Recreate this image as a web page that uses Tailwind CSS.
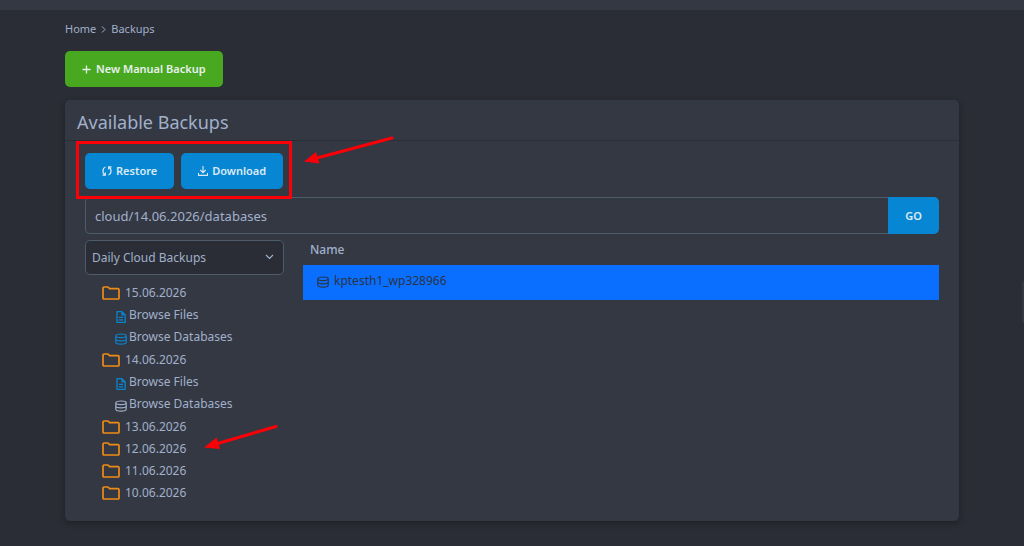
<!DOCTYPE html>
<html lang="en">
<head>
<meta charset="utf-8">
<meta name="viewport" content="width=device-width, initial-scale=1">
<title>Backups</title>
<script src="https://cdn.jsdelivr.net/npm/@tailwindcss/browser@4"></script>
</head>
<body class="relative min-h-screen overflow-x-hidden bg-[#2a2d35] font-['Noto_Sans',sans-serif] text-[13px] leading-[22px] text-[#a1b0cb]">
<svg class="hidden" aria-hidden="true">
  <symbol id="folder" viewBox="0 0 18 14"><path d="M1 2.2Q1 1 2.2 1H6L7.6 2.700H16Q17 2.700 17 3.7V12Q17 13 16 13H2Q1 13 1 12Z" fill="none" stroke="currentColor" stroke-width="1.7" stroke-linejoin="round"/></symbol>
  <symbol id="file" viewBox="0 0 10 12"><path d="M1 .7H6L9.2 3.9V11.3H1ZM6 .7V3.9H9.2M2.8 6.4H7.2M2.8 8.8H7.2" fill="none" stroke="currentColor" stroke-width="1.3" stroke-linejoin="round"/></symbol>
  <symbol id="database" viewBox="0 0 12 12"><path d="M.8 2.800C.8 .4 11.2 .4 11.2 2.800S.8 5.200 .8 2.800V9.2C.8 11.700 11.2 11.700 11.2 9.2V2.800M.8 6C.8 8.400 11.2 8.400 11.2 6" fill="none" stroke="currentColor" stroke-width="1.2"/></symbol>
</svg>
<header class="h-[10px] bg-[#343842]"></header>
<main class="mx-[65px] pt-2 pb-6">
  <nav aria-label="Breadcrumb" class="flex items-center gap-1 text-[11px]">
    <a href="#">Home</a>
    <svg class="size-[7px]" viewBox="0 0 7 7" fill="none" stroke="currentColor"><path d="M2 .5 5 3.5 2 6.500"/></svg>
    <a href="#">Backups</a>
  </nav>
  <button type="button" class="mt-[11px] flex h-9 items-center gap-[5px] rounded-[5px] bg-[#48a921] px-[17px] text-[11px] font-semibold text-[#e8f0ee]">
    <svg class="size-[9px]" viewBox="0 0 9 9" stroke="currentColor" stroke-width="1.3"><path d="M4.5 .5V8.5M.5 4.5H8.5"/></svg>
    New Manual Backup
  </button>
  <section class="mt-[13px] rounded-[5px] bg-[#343842] pb-[17px] shadow-[0_2px_6px_rgba(0,0,0,0.3)]">
    <h1 class="border-b border-[#2b2e37] px-3 pt-[10px] pb-[6px] text-lg leading-6 font-normal">Available Backups</h1>
    <div class="px-5 pt-3">
      <div class="relative flex w-fit gap-[7px]">
        <button type="button" class="flex h-9 items-center gap-1 rounded-[5px] bg-[#0787d3] px-[17px] text-[11px] font-semibold text-[#dceaf5]">
          <svg class="size-[10px]" viewBox="0 0 10 10" fill="none" stroke="currentColor" stroke-width="1.3"><path d="M3.500 1C.3 2 .2 7 2.6 8.8M.5 9.2H3.300V6.600M6.5 9C9.7 8 9.8 3 7.4 1.2M9.500 .8H6.700V3.400"/></svg>
          Restore
        </button>
        <button type="button" class="flex h-9 items-center gap-1 rounded-[5px] bg-[#0787d3] px-[17px] text-[11px] font-semibold text-[#dceaf5]">
          <svg class="size-[10px]" viewBox="0 0 10 10" fill="none" stroke="currentColor" stroke-width="1.1"><path d="M5 0V6.5M2.3 4 5 6.7 7.7 4M.5 7V9.4H9.5V7"/></svg>
          Download
        </button>
        <div class="absolute -inset-x-[9px] -top-3 -bottom-[10px] border-[3px] border-[#fb0007]"></div>
      </div>
      <form class="mt-2 flex h-[37px]">
        <input aria-label="Path" value="cloud/14.06.2026/databases" class="min-w-0 flex-1 rounded-l-[5px] border border-r-0 border-[#4c5c6b] bg-transparent px-[9px] outline-none">
        <button type="button" class="w-[51px] rounded-r-[5px] bg-[#0787d3] text-[11px] font-semibold text-[#dceaf5]">GO</button>
      </form>
      <div class="mt-[6px] flex gap-[19px]">
        <div class="w-[199px] shrink-0">
          <div class="relative">
            <select aria-label="Backup type" class="h-[35px] w-full appearance-none rounded-[5px] border border-[#4c5c6b] bg-[#2a2d35] px-[6px] text-xs outline-none"><option>Daily Cloud Backups</option></select>
            <svg class="pointer-events-none absolute top-[14px] right-[10px] h-[6px] w-[9px]" viewBox="0 0 9 6" fill="none" stroke="currentColor" stroke-width="1.2"><path d="M1 1 4.5 4.5 8 1"/></svg>
          </div>
          <ul class="mt-[7px] pl-[17px] text-xs leading-[22px]">
            <li class="pb-px">
              <div class="flex items-center gap-[5px]"><svg class="h-[14px] w-[18px] text-[#ef8b16]"><use href="#folder"/></svg>15.06.2026</div>
              <ul class="pl-[13px]">
                <li><a href="#" class="flex items-center gap-[2px]"><svg class="mt-1 h-3 w-3 text-[#0b84ce]"><use href="#file"/></svg>Browse Files</a></li>
                <li><a href="#" class="flex items-center gap-[2px]"><svg class="mt-1 h-3 w-3 text-[#0b84ce]"><use href="#database"/></svg>Browse Databases</a></li>
              </ul>
            </li>
            <li class="pb-px">
              <div class="flex items-center gap-[5px]"><svg class="h-[14px] w-[18px] text-[#ef8b16]"><use href="#folder"/></svg>14.06.2026</div>
              <ul class="pl-[13px]">
                <li><a href="#" class="flex items-center gap-[2px]"><svg class="mt-1 h-3 w-3 text-[#0b84ce]"><use href="#file"/></svg>Browse Files</a></li>
                <li><a href="#" class="flex items-center gap-[2px]"><svg class="mt-1 h-3 w-3"><use href="#database"/></svg>Browse Databases</a></li>
              </ul>
            </li>
            <li class="flex items-center gap-[5px]"><svg class="h-[14px] w-[18px] text-[#ef8b16]"><use href="#folder"/></svg>13.06.2026</li>
            <li class="flex items-center gap-[5px]"><svg class="h-[14px] w-[18px] text-[#ef8b16]"><use href="#folder"/></svg>12.06.2026</li>
            <li class="flex items-center gap-[5px]"><svg class="h-[14px] w-[18px] text-[#ef8b16]"><use href="#folder"/></svg>11.06.2026</li>
            <li class="flex items-center gap-[5px]"><svg class="h-[14px] w-[18px] text-[#ef8b16]"><use href="#folder"/></svg>10.06.2026</li>
          </ul>
        </div>
        <div class="min-w-0 flex-1">
          <table class="w-full text-left text-xs">
            <thead><tr><th class="h-[25px] px-[7px] pb-[6px] font-medium leading-[18px]">Name</th></tr></thead>
            <tbody><tr><td class="h-[35px] bg-[#0a6eff] px-[14px] pb-1 text-[#2b3444]"><div class="flex items-center gap-[5px]"><svg class="mt-[2px] size-3"><use href="#database"/></svg>kptesth1_wp328966</div></td></tr></tbody>
          </table>
        </div>
      </div>
    </div>
  </section>
</main>
<div class="absolute top-[281px] right-0 h-[42px] w-[2px] rounded-l-sm bg-[#343842]"></div>
<svg class="pointer-events-none absolute top-[134px] left-[302px] h-8 w-24" viewBox="0 0 96 32" fill="#fb0007" stroke="#fb0007" aria-hidden="true"><path d="M15 24 90 4" stroke-width="3" stroke-linecap="round"/><path d="M2 27.5 14 18 17.500 29.500Z" stroke="none"/></svg>
<svg class="pointer-events-none absolute top-[422px] left-[202px] h-8 w-24" viewBox="0 0 96 32" fill="#fb0007" stroke="#fb0007" aria-hidden="true"><path d="M14 22 74 4.500" stroke-width="3" stroke-linecap="round"/><path d="M2 25.5 14.500 15.500 18 27Z" stroke="none"/></svg>
</body>
</html>
